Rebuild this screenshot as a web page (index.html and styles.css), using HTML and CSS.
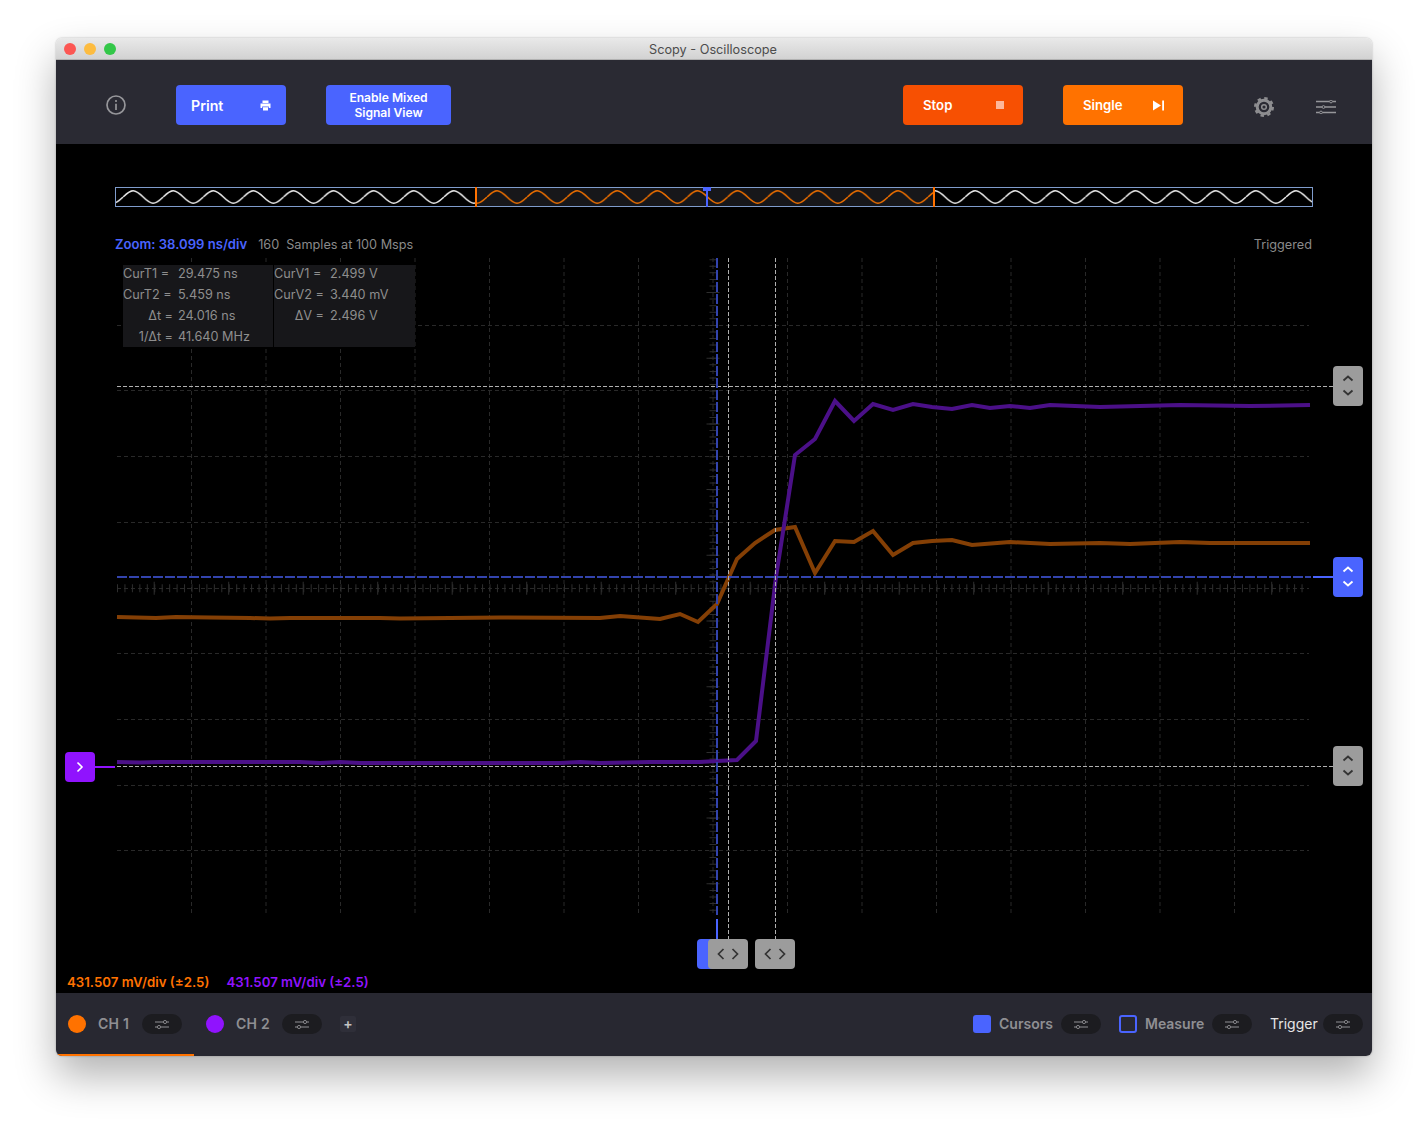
FILE: index.html
```html
<!DOCTYPE html>
<html lang="en">
<head>
<meta charset="utf-8">
<title>Scopy - Oscilloscope</title>
<link rel="stylesheet" href="styles.css">
</head>
<body>
<svg class="defs" width="0" height="0" aria-hidden="true">
  <symbol id="sliders" viewBox="0 0 14 9">
    <path d="M0 2H8.2M11.8 2H14M0 7H2.2M5.8 7H14" fill="none" stroke="currentColor" stroke-width="1"/>
    <circle cx="10" cy="2" r="1.6" fill="none" stroke="currentColor" stroke-width=".9"/>
    <circle cx="4" cy="7" r="1.6" fill="none" stroke="currentColor" stroke-width=".9"/>
  </symbol>
  <symbol id="updown" viewBox="0 0 30 40">
    <path d="M10.5 14.5L15 10.5L19.500 14.500M10.500 24.500L15 28.500L19.500 24.500" fill="none" stroke="currentColor" stroke-width="1.800"/>
  </symbol>
  <symbol id="leftright" viewBox="0 0 40 30">
    <path d="M15.500 10L10.500 15L15.500 20M24.500 10L29.500 15L24.500 20" fill="none" stroke="currentColor" stroke-width="1.700"/>
  </symbol>
</svg>
<div class="window">
  <header class="titlebar">
    <span class="light light-red"></span>
    <span class="light light-yellow"></span>
    <span class="light light-green"></span>
    <span class="title">Scopy - Oscilloscope</span>
  </header>

  <nav class="toolbar">
    <svg class="icon-info" width="20" height="20" viewBox="0 0 20 20">
      <circle cx="10" cy="10" r="9" fill="none" stroke="currentColor" stroke-width="1.700"/>
      <path d="M10 8.800V15" stroke="currentColor" stroke-width="1.700"/>
      <circle cx="10" cy="6" r="1.100" fill="currentColor"/>
    </svg>
    <button class="btn btn-blue btn-print"><span>Print</span>
      <svg width="11" height="11" viewBox="0 0 11 11"><path fill="#fff" d="M2.500 0.500H8.500V3H2.500ZM0.500 3.500H10.500V8H8.800V6.500H2.200V8H0.500ZM3 7.300H8V10.500H3Z"/></svg>
    </button>
    <button class="btn btn-blue btn-mixed">Enable Mixed<br>Signal View</button>
    <span class="spacer"></span>
    <button class="btn btn-stop"><span>Stop</span><i class="stop-square"></i></button>
    <button class="btn btn-single"><span>Single</span>
      <svg width="11" height="11" viewBox="0 0 11 11"><path fill="#fff" d="M0 0.500L8 5.500L0 10.500ZM9.200 0.500H11V10.500H9.200Z"/></svg>
    </button>
    <svg class="icon-gear" width="20" height="20" viewBox="0 0 20 20">
      <circle cx="10" cy="10" r="6.800" fill="none" stroke="currentColor" stroke-width="3"/>
      <circle cx="10" cy="10" r="8.800" fill="none" stroke="currentColor" stroke-width="2.400" stroke-dasharray="3.400 3.510"/>
      <circle cx="10" cy="10" r="2.300" fill="none" stroke="currentColor" stroke-width="1.500"/>
    </svg>
    <svg class="icon-tune" width="20" height="14" viewBox="0 0 20 14">
      <path d="M0 1.500H13.500M16.500 1.500H20M0 7H6M9 7H20M0 12.500H3.500M6.500 12.500H20" stroke="currentColor" stroke-width="1.300"/>
      <circle cx="15" cy="1.500" r="1.400" fill="none" stroke="currentColor"/>
      <circle cx="7.500" cy="7" r="1.400" fill="none" stroke="currentColor"/>
      <circle cx="5" cy="12.500" r="1.400" fill="none" stroke="currentColor"/>
    </svg>
  </nav>

  <main class="plot">
    <svg class="canvas" viewBox="56 144 1316 849" width="1316" height="849">
      <defs>
        <pattern id="waveW" patternUnits="userSpaceOnUse" width="40" height="18" patternTransform="translate(83 188) scale(1.0025 1)">
          <path d="M0 9C3.260 5.770 6.380 2.700 10 2.700C13.620 2.700 16.740 5.770 20 9C23.260 12.230 26.380 15.300 30 15.300C33.620 15.300 36.740 12.230 40 9" fill="none" stroke="#e6e6e6" stroke-width="1.600"/>
        </pattern>
        <pattern id="waveO" patternUnits="userSpaceOnUse" width="40" height="18" patternTransform="translate(86 188) scale(1.0025 1)">
          <path d="M0 9C3.260 5.770 6.380 2.700 10 2.700C13.620 2.700 16.740 5.770 20 9C23.260 12.230 26.380 15.300 30 15.300C33.620 15.300 36.740 12.230 40 9" fill="none" stroke="#e86c00" stroke-width="1.600"/>
        </pattern>
      </defs>

      <!-- minimap -->
      <rect x="476" y="188" width="458" height="18" fill="#17171a"/>
      <rect x="116" y="188" width="360" height="18" fill="url(#waveW)"/>
      <rect x="934" y="188" width="378" height="18" fill="url(#waveW)"/>
      <rect x="476" y="188" width="458" height="18" fill="url(#waveO)"/>
      <rect x="115.500" y="187.500" width="1197" height="19" fill="none" stroke="#7f9ccc"/>
      <path d="M476 187V207M934 187V207" stroke="#ff7200" stroke-width="2"/>
      <path d="M707 188V207" stroke="#4a64ff" stroke-width="2"/>
      <rect x="703" y="187" width="8" height="4" fill="#4a64ff"/>

      <!-- grid -->
      <g class="grid">
        <path d="M117 325.500H1309M117 390.500H1309M117 456.500H1309M117 522.500H1309M117 588.500H1309M117 653.500H1309M117 719.500H1309M117 785.500H1309M117 850.500H1309"/>
        <path d="M191.500 258V915M266 258V915M340.500 258V915M415 258V915M489.500 258V915M564 258V915M638.500 258V915M713 258V915M787.500 258V915M862 258V915M936.500 258V915M1011 258V915M1085.500 258V915M1160 258V915M1234.500 258V915"/>
      </g>
      <!-- axis ticks -->
      <g class="ticks">
        <line x1="713" y1="259.200" x2="713" y2="915" stroke-width="7" stroke-dasharray="1 5.570"/>
        <line x1="713" y1="292" x2="713" y2="915" stroke-width="13" stroke-dasharray="1 64.700"/>
        <line x1="117" y1="588.300" x2="1309" y2="588.300" stroke-width="8" stroke-dasharray="1 6.450"/>
        <line x1="153.700" y1="588.300" x2="1309" y2="588.300" stroke-width="13" stroke-dasharray="1 73.500"/>
      </g>

      <!-- traces -->
      <polyline class="trace trace-orange" points="117,617 156,618 176,617 210,617.500 250,618 270,618.500 290,618 380,618 400,618.500 500,617.500 600,618 620,616 660,619 680,614 698,622 717,604 737,559 755,543 775,530 795,527 815,573 835,541 854,542 873,531 893,555 913,543 932,541 952,540 972,545 1010,542 1050,544 1100,543 1130,544 1180,542 1210,543 1310,543"/>
      <polyline class="trace trace-purple" points="117,762 140,762.500 160,762 300,762 320,763 340,762 360,763 560,763 580,762 600,763 650,762 700,762 717,761 737,760 756,741 776,577 795,455 815,439 835,401 854,421 873,404 893,410 913,404 932,407 952,409 972,405 990,408 1010,406 1030,408 1050,405 1100,407 1180,405 1250,406 1310,405"/>

      <!-- cursors -->
      <g class="cursor-white">
        <path d="M117 386.500H1333M117 766.500H1333M728.500 258V940M775.500 258V940"/>
      </g>
      <path class="cursor-blue" d="M117 577H1311"/>
      <path class="cursor-blue cursor-blue-v" d="M717 258V915"/>
      <path d="M1313 577H1333M717 919V940" stroke="#4a64ff" stroke-width="2" fill="none"/>
      <path d="M95 767H115" stroke="#9013fe" stroke-width="2"/>
    </svg>

    <div class="info-row">
      <div class="info-left">
        <span class="zoom">Zoom: 38.099 ns/div</span>
        <span class="samples">160</span>
        <span>Samples at 100 Msps</span>
      </div>
      <span>Triggered</span>
    </div>

    <section class="readout">
      <div class="readout-col readout-t">
        <span>CurT1 =</span><span>29.475 ns</span>
        <span>CurT2 =</span><span>5.459 ns</span>
        <span class="right">Δt =</span><span>24.016 ns</span>
        <span class="right">1/Δt =</span><span>41.640 MHz</span>
      </div>
      <div class="readout-col readout-v">
        <span>CurV1 =</span><span>2.499 V</span>
        <span>CurV2 =</span><span>3.440 mV</span>
        <span class="right">ΔV =</span><span>2.496 V</span>
      </div>
    </section>

    <div class="scales">
      <span class="scale-orange">431.507 mV/div (±2.5)</span>
      <span class="scale-purple">431.507 mV/div (±2.5)</span>
    </div>

    <div class="handle handle-v handle-gray h-top"><svg width="30" height="40"><use href="#updown"/></svg></div>
    <div class="handle handle-v handle-blue h-mid"><svg width="30" height="40"><use href="#updown"/></svg></div>
    <div class="handle handle-v handle-gray h-low"><svg width="30" height="40"><use href="#updown"/></svg></div>
    <div class="handle handle-ch">
      <svg width="30" height="30" viewBox="0 0 30 30"><path d="M12.500 10.500L17 15L12.500 19.500" fill="none" stroke="#fff" stroke-width="1.600"/></svg>
    </div>
    <div class="handle handle-tab"></div>
    <div class="handle handle-h handle-gray h-c1"><svg width="40" height="30"><use href="#leftright"/></svg></div>
    <div class="handle handle-h handle-gray h-c2"><svg width="40" height="30"><use href="#leftright"/></svg></div>
  </main>

  <footer class="bottom">
    <div class="ch ch-active">
      <i class="dot dot-orange"></i><span class="ch-label">CH 1</span>
      <span class="pill"><svg width="14" height="9"><use href="#sliders"/></svg></span>
    </div>
    <div class="ch ch-second">
      <i class="dot dot-purple"></i><span class="ch-label">CH 2</span>
      <span class="pill"><svg width="14" height="9"><use href="#sliders"/></svg></span>
    </div>
    <span class="add">+</span>
    <span class="spacer"></span>
    <div class="tool tool-cursors">
      <i class="check check-on"></i><span class="ch-label">Cursors</span>
      <span class="pill"><svg width="14" height="9"><use href="#sliders"/></svg></span>
    </div>
    <div class="tool tool-measure">
      <i class="check"></i><span class="ch-label">Measure</span>
      <span class="pill"><svg width="14" height="9"><use href="#sliders"/></svg></span>
    </div>
    <div class="tool tool-trigger">
      <span class="trigger-label">Trigger</span>
      <span class="pill"><svg width="14" height="9"><use href="#sliders"/></svg></span>
    </div>
  </footer>
</div>
</body>
</html>
```

FILE: styles.css
```css
* { box-sizing: border-box; }

html, body { margin: 0; height: 100%; }

body {
  background: #fff;
  padding: 38px 56px 0;
  font-family: Inter, "Liberation Sans", sans-serif;
  overflow: hidden;
}

.defs { position: absolute; }

.window {
  width: 1316px;
  height: 1018px;
  display: flex;
  flex-direction: column;
  border-radius: 6px;
  overflow: hidden;
  box-shadow: 0 0 2px rgba(0, 0, 0, .3), 0 20px 40px rgba(0, 0, 0, .3);
}

.titlebar {
  height: 22px;
  flex: none;
  position: relative;
  display: flex;
  align-items: center;
  gap: 8px;
  padding-left: 8px;
  background: linear-gradient(#e9e9e9, #d2d2d2);
  border-bottom: 1px solid #b1b1b1;
}

.light { width: 12px; height: 12px; border-radius: 50%; }
.light-red { background: #fc5753; }
.light-yellow { background: #fdbc40; }
.light-green { background: #33c748; }

.title {
  position: absolute;
  left: 0;
  right: 2px;
  padding-top: 1px;
  text-align: center;
  font-size: 12.7px;
  color: #4c4c4c;
}

.toolbar {
  height: 84px;
  flex: none;
  display: flex;
  align-items: center;
  padding: 6px 36px 0 50px;
  background: #2a2a33;
}

.spacer { flex: 1; }

.icon-info { color: #96969a; margin-right: 50px; }

.btn {
  height: 40px;
  border: 0;
  border-radius: 4px;
  padding: 0;
  font-family: inherit;
  font-weight: 600;
  color: #fff;
  display: flex;
  align-items: center;
  justify-content: space-between;
}

.btn-blue { background: #4a64ff; }

.btn-print {
  width: 110px;
  padding: 0 15px;
  font-size: 14.2px;
  margin-right: 40px;
}

.btn-mixed {
  width: 125px;
  font-size: 12.1px;
  line-height: 15px;
  justify-content: center;
  text-align: center;
}

.btn-stop, .btn-single {
  width: 120px;
  padding: 0 19px 0 20px;
  font-size: 13.2px;
}

.btn-stop { background: #f75002; margin-right: 40px; }
.btn-single { background: #ff7200; margin-right: 71px; }

.stop-square { width: 8px; height: 8px; background: #fdb79b; }

.icon-gear { color: #8d8d90; margin: 4px 42px 0 0; }
.icon-tune { color: #96969a; margin-top: 4px; }

.plot {
  position: relative;
  flex: 1;
  display: flex;
  flex-direction: column;
  background: #000;
  padding: 93px 60px 0 59px;
  font-size: 12.7px;
  line-height: 15px;
  color: #8a8a8a;
}

.canvas { position: absolute; left: 0; top: 0; display: block; }

.grid path {
  fill: none;
  stroke: #292929;
  stroke-dasharray: 4 3;
}

.ticks line { stroke: #2e2e2e; fill: none; }

.trace { fill: none; stroke-width: 4; stroke-linejoin: miter; }
.trace-orange { stroke: #843f05; }
.trace-purple { stroke: #4b1088; }

.cursor-white path {
  fill: none;
  stroke: #b0b0b0;
  stroke-dasharray: 4 2;
}

.cursor-blue {
  fill: none;
  stroke: #3344ad;
  stroke-width: 2;
  stroke-dasharray: 10 2;
}

.info-row {
  position: relative;
  display: flex;
  justify-content: space-between;
}

.info-left { display: flex; }

.zoom { color: #4a64ff; font-size: 13.1px; font-weight: 600; margin-right: 11px; }
.samples { margin-right: 7px; }

.readout {
  position: relative;
  display: flex;
  gap: 1px;
  width: 292px;
  margin: 13px 0 0 8px;
  background: #000;
}

.readout-col {
  display: grid;
  grid-template-rows: repeat(4, 21px);
  align-items: start;
  line-height: 18px;
  white-space: nowrap;
  height: 82px;
  background: #17171a;
  color: #8e8e8e;
}

.readout-t { width: 150px; grid-template-columns: 50px 1fr; column-gap: 5px; }
.readout-v { width: 141px; grid-template-columns: 50px 1fr; column-gap: 6px; }

.right { text-align: right; }

.scales {
  position: relative;
  margin: auto 0 3px -48px;
  display: flex;
  gap: 17px;
  font-size: 13.25px;
  font-weight: 600;
}

.scale-orange { color: #ff7200; }
.scale-purple { color: #9013fe; }

.handle {
  position: absolute;
  border-radius: 4px;
}

.handle svg { display: block; }

.handle-v { left: 1277px; width: 30px; height: 40px; }
.handle-h { width: 40px; height: 30px; top: 795px; }
.handle-gray { background: #9c9c9c; color: #333; }
.handle-blue { background: #4a64ff; color: #fff; }

.h-top { top: 222px; }
.h-mid { top: 413px; }
.h-low { top: 602px; }
.h-c1 { left: 652px; }
.h-c2 { left: 699px; }

.handle-ch {
  left: 9px;
  top: 608px;
  width: 30px;
  height: 30px;
  background: #9013fe;
}

.handle-tab {
  left: 641px;
  top: 795px;
  width: 28px;
  height: 30px;
  background: #4a64ff;
}

.bottom {
  height: 63px;
  flex: none;
  position: relative;
  display: flex;
  align-items: center;
  padding: 0 9px 1px 12px;
  background: #282831;
  font-size: 14px;
  font-weight: 600;
  color: #8f8f93;
}

.bottom::after {
  content: "";
  position: absolute;
  left: 1px;
  bottom: 0;
  width: 137px;
  height: 2px;
  background: #ff7200;
}

.ch, .tool { display: flex; align-items: center; }

.ch-active { margin-right: 24px; }
.ch-second { margin-right: 18px; }
.tool-cursors { margin-right: 18px; }
.tool-measure { margin-right: 18px; }

.dot { width: 18px; height: 18px; border-radius: 50%; margin-right: 12px; }
.dot-orange { background: #ff7200; }
.dot-purple { background: #9013fe; }

.ch-label, .trigger-label { padding-bottom: 2px; }
.ch .ch-label { letter-spacing: .25px; }
.ch-active .ch-label { width: 44px; }
.ch-second .ch-label { width: 46px; }
.tool-cursors .ch-label { width: 62px; }
.tool-measure .ch-label { width: 67px; }

.pill {
  width: 40px;
  height: 20px;
  border-radius: 10px;
  background: #1c1c20;
  color: #8f8f93;
  display: flex;
  align-items: center;
  justify-content: center;
}

.add {
  width: 16px;
  height: 16px;
  border-radius: 2px;
  background: #2f2f39;
  color: #c4c4c4;
  font-size: 14px;
  line-height: 16px;
  text-align: center;
}

.check {
  width: 18px;
  height: 18px;
  border-radius: 3px;
  border: 2px solid #4a64ff;
  margin-right: 8px;
}

.check-on { background: #4a64ff; }

.trigger-label {
  width: 53px;
  color: #e6e6e6;
  font-weight: 400;
}
```
